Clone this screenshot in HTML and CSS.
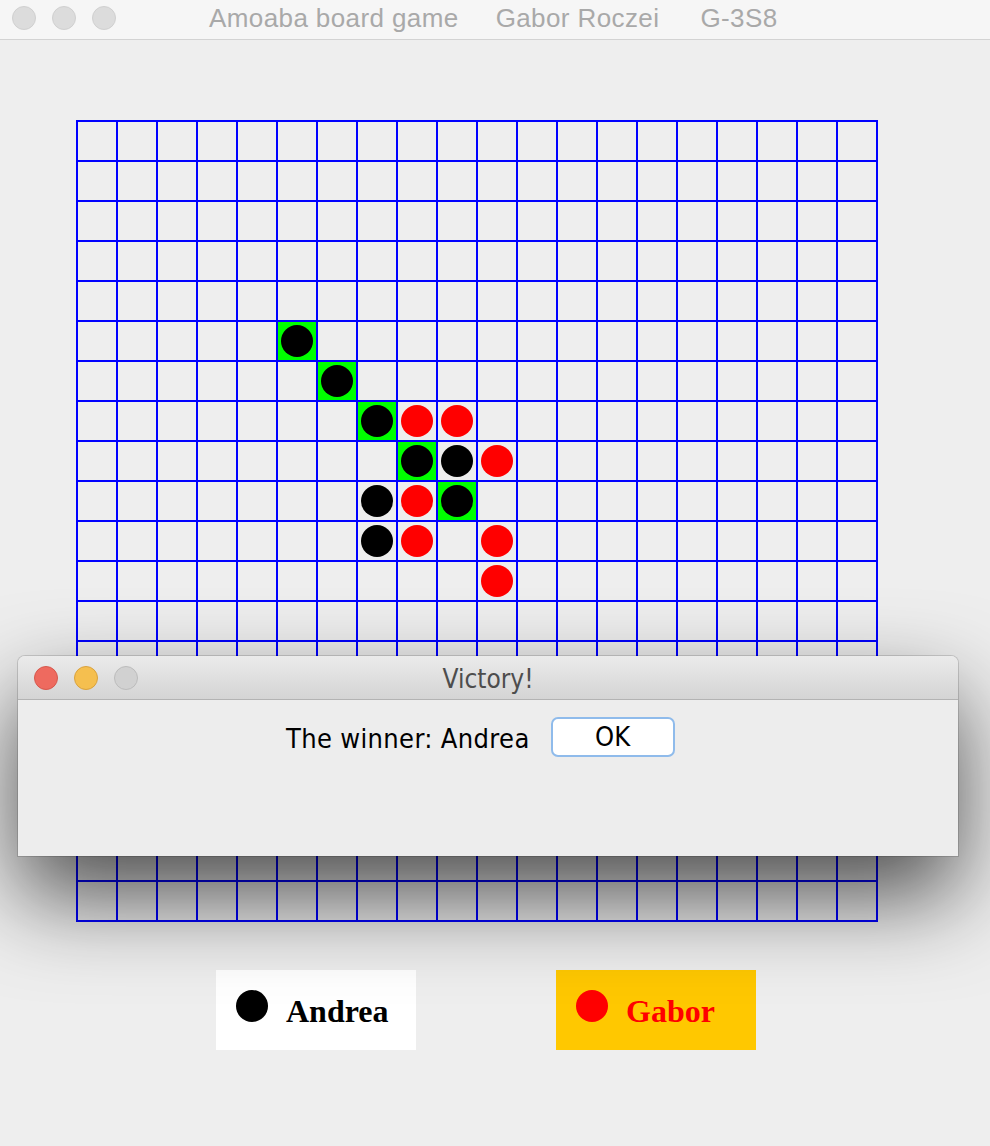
FILE: index.html
```html
<!DOCTYPE html>
<html lang="en">
<head>
<meta charset="utf-8">
<title>Amoaba board game</title>
<link rel="stylesheet" href="styles.css">
</head>
<body>
<div class="window">
  <header class="titlebar">
    <div class="lights">
      <span class="light"></span><span class="light"></span><span class="light"></span>
    </div>
    <div class="title">
      <span class="title-part">Amoaba board game</span>
      <span class="title-part">Gabor Roczei</span>
      <span class="title-part title-id">G-3S8</span>
    </div>
  </header>

  <main class="content">
    <div class="board">
      <div class="cell win" style="grid-column:6;grid-row:6"><span class="stone black"></span></div>
      <div class="cell win" style="grid-column:7;grid-row:7"><span class="stone black"></span></div>
      <div class="cell win" style="grid-column:8;grid-row:8"><span class="stone black"></span></div>
      <div class="cell" style="grid-column:9;grid-row:8"><span class="stone red"></span></div>
      <div class="cell" style="grid-column:10;grid-row:8"><span class="stone red"></span></div>
      <div class="cell win" style="grid-column:9;grid-row:9"><span class="stone black"></span></div>
      <div class="cell" style="grid-column:10;grid-row:9"><span class="stone black"></span></div>
      <div class="cell" style="grid-column:11;grid-row:9"><span class="stone red"></span></div>
      <div class="cell" style="grid-column:8;grid-row:10"><span class="stone black"></span></div>
      <div class="cell" style="grid-column:9;grid-row:10"><span class="stone red"></span></div>
      <div class="cell win" style="grid-column:10;grid-row:10"><span class="stone black"></span></div>
      <div class="cell" style="grid-column:8;grid-row:11"><span class="stone black"></span></div>
      <div class="cell" style="grid-column:9;grid-row:11"><span class="stone red"></span></div>
      <div class="cell" style="grid-column:11;grid-row:11"><span class="stone red"></span></div>
      <div class="cell" style="grid-column:11;grid-row:12"><span class="stone red"></span></div>
    </div>

    <div class="players">
      <div class="player player-andrea">
        <span class="dot dot-black"></span>
        <span class="player-name">Andrea</span>
      </div>
      <div class="player player-gabor">
        <span class="dot dot-red"></span>
        <span class="player-name">Gabor</span>
      </div>
    </div>
  </main>

  <div class="dialog">
    <div class="dialog-titlebar">
      <div class="dialog-lights">
        <span class="dlight dlight-close"></span>
        <span class="dlight dlight-min"></span>
        <span class="dlight dlight-max"></span>
      </div>
      <div class="dialog-title">Victory!</div>
    </div>
    <div class="dialog-body">
      <span class="dialog-message">The winner: Andrea</span>
      <button class="ok-button">OK</button>
    </div>
  </div>
</div>
</body>
</html>
```

FILE: styles.css
```css
html, body {
  margin: 0;
  padding: 0;
}

body {
  background: #eeeeee;
  width: 990px;
  height: 1146px;
  overflow: hidden;
}

.window {
  position: relative;
  width: 990px;
  height: 1146px;
  background: #eeeeee;
}

/* Main title bar */
.titlebar {
  height: 39px;
  background: #f6f6f6;
  border-bottom: 1px solid #d3d3d3;
  display: flex;
  align-items: center;
  box-sizing: content-box;
}

.lights {
  display: flex;
  gap: 16px;
  padding-left: 12px;
  margin-top: -3px;
}

.light {
  width: 24px;
  height: 24px;
  box-sizing: border-box;
  border-radius: 50%;
  background: #dcdcdc;
  border: 1px solid #d0d0d0;
}

.title {
  display: flex;
  margin-left: 93px;
  font-family: "Liberation Sans", Arial, sans-serif;
  font-size: 26px;
  letter-spacing: 0.4px;
  color: #a9a9a9;
  white-space: nowrap;
  margin-top: -2px;
}

.title-part + .title-part {
  margin-left: 37px;
}

.title-part.title-id {
  margin-left: 41px;
}

/* Content */
.content {
  padding: 80px 0 0 76px;
}

.board {
  width: 802px;
  height: 802px;
  box-sizing: border-box;
  padding: 2px 0 0 2px;
  display: grid;
  grid-template-columns: repeat(20, 38px);
  grid-template-rows: repeat(20, 38px);
  gap: 2px;
  background-image:
    linear-gradient(to right, #0000ff 2px, transparent 2px),
    linear-gradient(to bottom, #0000ff 2px, transparent 2px);
  background-size: 40px 40px;
}

.cell {
  display: flex;
  align-items: center;
  justify-content: center;
}

.cell.win {
  background: #00ff00;
}

.stone {
  width: 32px;
  height: 32px;
  border-radius: 50%;
}

.stone.black {
  background: #000000;
}

.stone.red {
  background: #ff0000;
}

/* Players */
.players {
  display: flex;
  gap: 140px;
  margin-top: 48px;
  padding-left: 140px;
}

.player {
  width: 200px;
  height: 80px;
  box-sizing: border-box;
  padding: 20px 0 0 20px;
  display: flex;
  align-items: baseline;
  gap: 18px;
}

.player-andrea {
  background: #ffffff;
}

.player-gabor {
  background: #ffc800;
}

.dot {
  width: 32px;
  height: 32px;
  border-radius: 50%;
  flex: none;
}

.dot-black {
  background: #000000;
}

.dot-red {
  background: #ff0000;
}

.player-name {
  font-family: "Liberation Serif", "Times New Roman", serif;
  font-weight: bold;
  font-size: 32px;
}

.player-andrea .player-name {
  color: #000000;
}

.player-gabor .player-name {
  color: #ff0000;
}

/* Dialog */
.dialog {
  position: absolute;
  left: 18px;
  top: 656px;
  width: 940px;
  height: 200px;
  border-radius: 7px 7px 0 0;
  background: #ededed;
  overflow: hidden;
  box-shadow: 0 40px 90px rgba(0, 0, 0, 0.68), 0 0 0 1px rgba(0, 0, 0, 0.14);
}

.dialog-titlebar {
  position: relative;
  height: 43px;
  background: linear-gradient(to bottom, #ebebeb, #d4d4d4);
  border-bottom: 1px solid #b3b3b3;
  display: flex;
  align-items: center;
  justify-content: center;
}

.dialog-lights {
  position: absolute;
  left: 16px;
  top: 10px;
  display: flex;
  gap: 16px;
}

.dlight {
  width: 24px;
  height: 24px;
  box-sizing: border-box;
  border-radius: 50%;
}

.dlight-close {
  background: #ee6a5f;
  border: 1px solid #d6584d;
}

.dlight-min {
  background: #f5bf4f;
  border: 1px solid #d9a23e;
}

.dlight-max {
  background: #d1d1d1;
  border: 1px solid #bcbcbc;
}

.dialog-title {
  font-family: "DejaVu Sans Condensed", "DejaVu Sans", sans-serif;
  font-size: 26px;
  color: #4d4d4d;
  margin-top: 2px;
}

.dialog-body {
  display: flex;
  align-items: center;
  padding: 17px 0 0 268px;
  height: 40px;
}

.dialog-message {
  font-family: "DejaVu Sans Condensed", "DejaVu Sans", sans-serif;
  font-size: 27px;
  letter-spacing: 0.35px;
  color: #000000;
  margin-top: 3px;
}

.ok-button {
  margin-left: 21px;
  width: 124px;
  height: 40px;
  box-sizing: border-box;
  background: #ffffff;
  border: 2px solid #8fbbeb;
  border-radius: 7px;
  font-family: "DejaVu Sans Condensed", "DejaVu Sans", sans-serif;
  font-size: 27px;
  color: #000000;
  padding: 0;
  line-height: 34px;
}
```
